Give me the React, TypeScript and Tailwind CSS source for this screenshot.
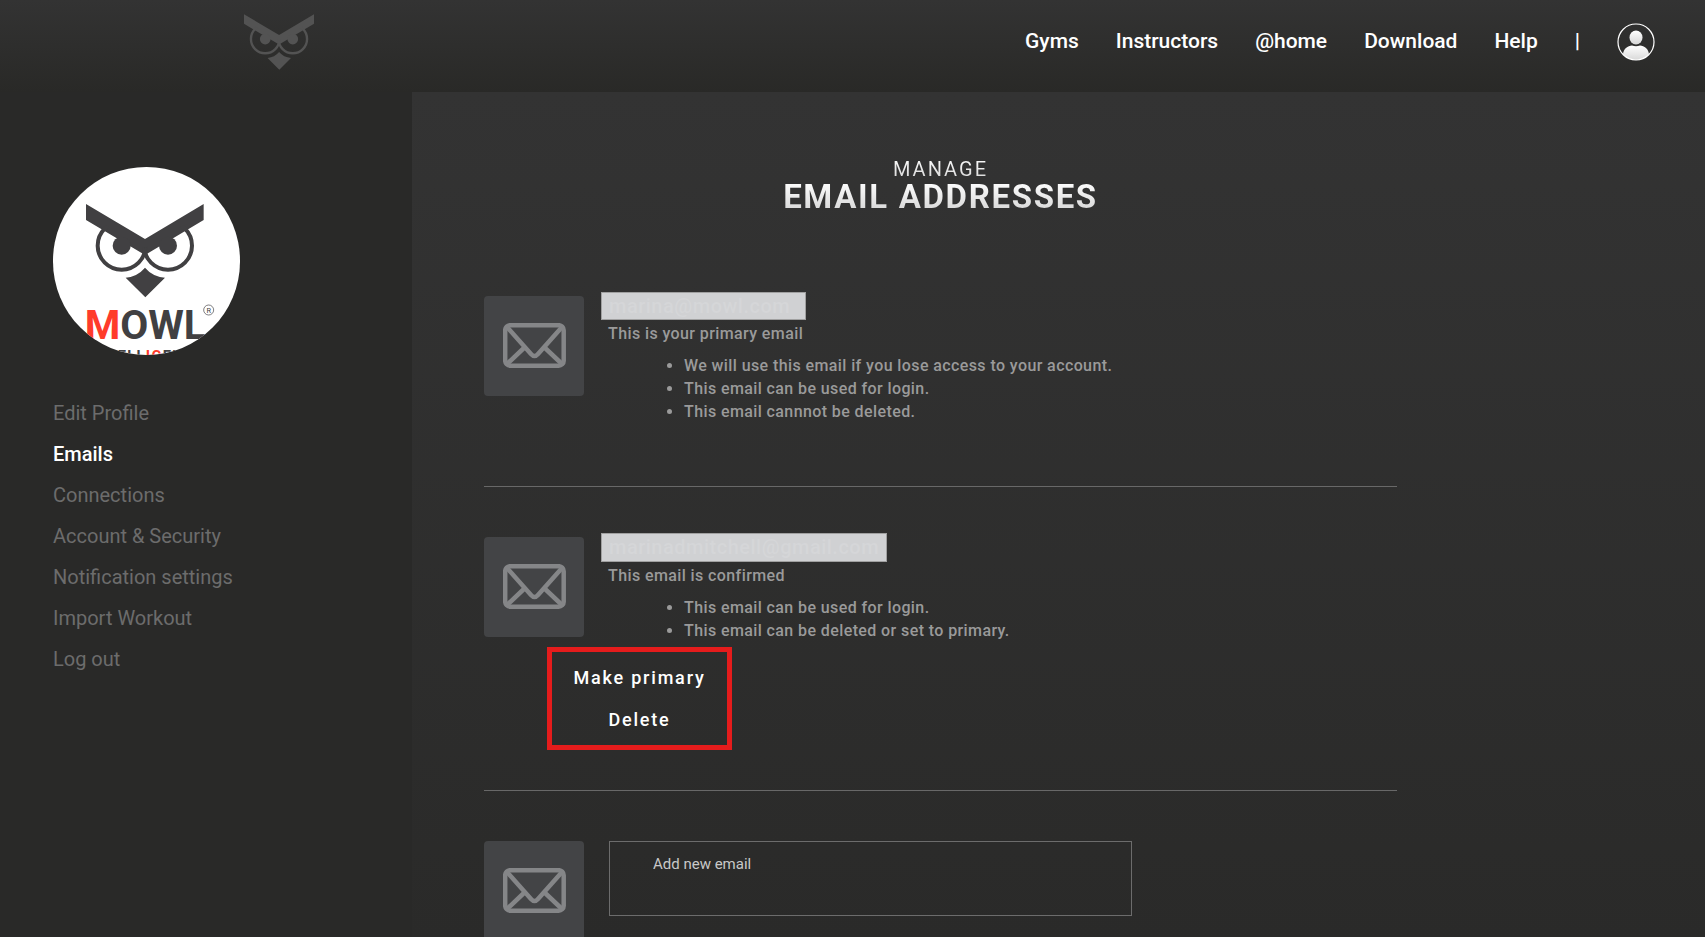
import React from "react";

const OWL_VIEWBOX = "138 162 353 280";

function OwlShapes({ id }: { id: string }) {
  return (
    <>
      <clipPath id={id}>
        <path d="M138 190 315 295 491 190V450H138Z" />
      </clipPath>
      <path d="M138 162 315 267 491 162V210L315 315 138 210Z" />
      <g clipPath={`url(#${id})`}>
        <circle cx="245" cy="287" r="27" />
        <circle cx="384" cy="287" r="27" />
        <circle cx="245" cy="287" r="72" fill="none" stroke="currentColor" strokeWidth="12" />
        <circle cx="384" cy="287" r="72" fill="none" stroke="currentColor" strokeWidth="12" />
      </g>
      <path d="M315 353Q292 380 257 383L316 442 375 383Q338 380 315 353Z" />
    </>
  );
}

function ProfilePicture() {
  return (
    <svg viewBox="39 51 561 564" className="h-[188px] w-[187px] rounded-full bg-white text-[#414042]" fill="currentColor" role="img" aria-label="Profile picture">
      <OwlShapes id="avatar-eyes" />
      <g fontFamily="'Liberation Sans Narrow', Roboto, sans-serif" fontWeight="700">
        <text x="134" y="568" fontSize="122">
          <tspan fill="#ff3b2b">M</tspan>OWL
        </text>
        <text x="322" y="632" fontSize="44" textAnchor="middle" letterSpacing="4">
          INTELL<tspan fill="#ff3b2b">IG</tspan>ENCE
        </text>
      </g>
      <circle cx="506" cy="480" r="15" fill="none" stroke="currentColor" strokeWidth="2" />
      <text x="506" y="488" fontSize="22" textAnchor="middle" fontFamily="Roboto, sans-serif">R</text>
    </svg>
  );
}

function EnvelopeTile() {
  return (
    <div className="flex size-25 shrink-0 items-start justify-center rounded bg-[#434446] pt-[27px]">
      <svg viewBox="0 0 63 45" className="h-[45px] w-[63px]" fill="none" stroke="#858688" strokeWidth="4.5" aria-hidden="true">
        <rect x="2.200" y="2.200" width="58.500" height="40.500" rx="5" />
        <path d="M4 4 28 31Q31.500 35 35 31L59 4M4 41 22 24M59 41 41 24" />
      </svg>
    </div>
  );
}

const navLinks = ["Gyms", "Instructors", "@home", "Download", "Help"];
const menu = ["Edit Profile", "Emails", "Connections", "Account & Security", "Notification settings", "Import Workout", "Log out"];

function EmailEntry({ address, boxClass, status, notes }: { address: string; boxClass: string; status: string; notes: string[] }) {
  return (
    <div className="flex gap-[17px]">
      <EnvelopeTile />
      <div className="-mt-1 text-base font-medium text-[#9a9a9a]">
        <p className={`border border-[#a0a0a0] bg-[#d0d1d3] px-[7px] text-xl tracking-wide text-[#d5d6d8] ${boxClass}`}>{address}</p>
        <p className="pl-[7px] leading-7 tracking-wide">{status}</p>
        <ul className="mt-1.5 list-disc pl-[83px] leading-[23px] tracking-wide">
          {notes.map((n) => (
            <li key={n}>{n}</li>
          ))}
        </ul>
      </div>
    </div>
  );
}

export default function App() {
  return (
    <div className="flex min-h-screen flex-col bg-[#292928] font-[Roboto,'Noto_Sans',sans-serif] text-white">
      <header className="flex h-[92px] shrink-0 items-start justify-between bg-linear-to-b from-[#333333] to-[#292927] pr-[50px] pl-[244px]">
        <a href="#home" aria-label="Home" className="pt-3.5">
          <svg viewBox={OWL_VIEWBOX} className="h-14 w-[70px] text-[#535353]" fill="currentColor">
            <OwlShapes id="logo-eyes" />
          </svg>
        </a>
        <nav className="flex items-start gap-[37px] pt-[23px] text-[21px] leading-9 font-medium">
          {navLinks.map((l) => (
            <a key={l} href={`#${l}`}>{l}</a>
          ))}
          <span>|</span>
          <a href="#account" aria-label="Account">
            <svg viewBox="0 0 38 38" className="size-[38px]">
              <defs>
                <linearGradient id="person" x1="0" y1="0" x2="0" y2="1">
                  <stop offset="0" stopColor="#fff" />
                  <stop offset="1" stopColor="#d6d6d6" />
                </linearGradient>
                <clipPath id="person-clip"><circle cx="19" cy="19" r="18" /></clipPath>
              </defs>
              <g fill="url(#person)" clipPath="url(#person-clip)">
                <ellipse cx="19" cy="14.5" rx="6.5" ry="7" />
                <path d="M6 38V32C6 26 11 22.500 15 22.500Q19 24 23 22.500C27 22.500 32 26 32 32V38Z" />
              </g>
              <circle cx="19" cy="19" r="18" fill="none" stroke="#fff" strokeWidth="1.2" />
            </svg>
          </a>
        </nav>
      </header>
      <div className="flex grow">
        <aside className="w-[412px] shrink-0 pt-[75px] pl-[53px]">
          <ProfilePicture />
          <ul className="mt-[38px] text-xl text-[#6c6c6c]">
            {menu.map((m) => (
              <li key={m} className="h-[41px] leading-[41px]">
                <a href={`#${m}`} className={m === "Emails" ? "font-medium text-white" : ""}>{m}</a>
              </li>
            ))}
          </ul>
        </aside>
        <main className="min-w-0 grow bg-linear-to-b from-[#333333] to-[#2a2a29] pl-[72px]">
          <div className="w-full max-w-[913px] pt-[65px]">
            <h1 className="text-center">
              <span className="block bg-linear-to-b from-white to-[#d5d5d5] bg-clip-text text-xl leading-6 tracking-widest text-transparent">MANAGE</span>
              <span className="block bg-linear-to-b from-white to-[#d5d5d5] bg-clip-text text-[33px] leading-8 font-bold tracking-wider text-transparent">EMAIL ADDRESSES</span>
            </h1>
            <div className="pt-[83px]">
              <EmailEntry
                address="marina@mowl.com"
                boxClass="w-[205px] leading-[26px]"
                status="This is your primary email"
                notes={["We will use this email if you lose access to your account.", "This email can be used for login.", "This email cannnot be deleted."]}
              />
            </div>
            <div className="mt-[63px] border-t border-[#686868] pt-[50px]">
              <EmailEntry
                address="marinadmitchell@gmail.com"
                boxClass="w-[286px] leading-[27px]"
                status="This email is confirmed"
                notes={["This email can be used for login.", "This email can be deleted or set to primary."]}
              />
              <div className="mt-[5px] ml-[63px] flex h-[103px] w-[185px] flex-col items-center justify-center border-5 border-[#e51c1c] text-lg leading-[42px] font-medium tracking-widest">
                <button type="button">Make primary</button>
                <button type="button">Delete</button>
              </div>
            </div>
            <form className="mt-10 flex gap-[25px] border-t border-[#686868] pt-[50px]">
              <EnvelopeTile />
              <input
                type="email"
                aria-label="Add new email"
                placeholder="Add new email"
                className="h-[75px] w-[523px] border border-[#6c6c6c] bg-transparent px-[43px] pb-[29px] text-[15px] placeholder:text-[#c8c8c8]"
              />
            </form>
          </div>
        </main>
      </div>
    </div>
  );
}
